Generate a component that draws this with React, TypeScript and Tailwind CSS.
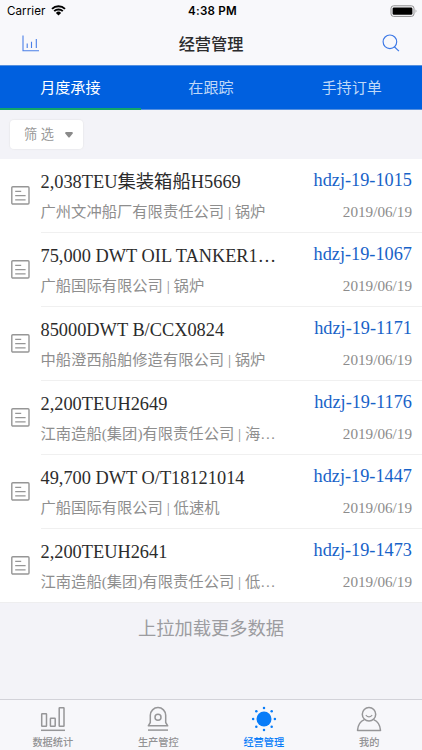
import React from 'react';

type Order = { title: string; company: string; code: string; date: string };

const orders: Order[] = [
    { title: '2,038TEU集装箱船H5669', company: '广州文冲船厂有限责任公司 | 锅炉', code: 'hdzj-19-1015', date: '2019/06/19' },
    { title: '75,000 DWT OIL TANKER1…', company: '广船国际有限公司 | 锅炉', code: 'hdzj-19-1067', date: '2019/06/19' },
    { title: '85000DWT B/CCX0824', company: '中船澄西船舶修造有限公司 | 锅炉', code: 'hdzj-19-1171', date: '2019/06/19' },
    { title: '2,200TEUH2649', company: '江南造船(集团)有限责任公司 | 海…', code: 'hdzj-19-1176', date: '2019/06/19' },
    { title: '49,700 DWT O/T18121014', company: '广船国际有限公司 | 低速机', code: 'hdzj-19-1447', date: '2019/06/19' },
    { title: '2,200TEUH2641', company: '江南造船(集团)有限责任公司 | 低…', code: 'hdzj-19-1473', date: '2019/06/19' },
];

const StatusBar: React.FC = () => (
    <div className="grid h-[22px] grid-cols-3 items-center pl-[7px] pr-1 font-['Inter',sans-serif] text-[11.6px] text-black">
        <div className="flex items-center gap-[6px] pt-px">
            <span className="tracking-[0.05px]">Carrier</span>
            <svg className="-mt-px" width="15" height="11" viewBox="0 0 15 11">
                <path d="M1 3.9a9.2 9.2 0 0 1 13 0M3.2 6.2a6.1 6.1 0 0 1 8.6 0" fill="none" stroke="#000" strokeWidth="1.9" />
                <path d="M4.9 7.9a3.7 3.7 0 0 1 5.2 0L7.5 10.6z" fill="#000" />
            </svg>
        </div>
        <span className="pt-px text-center font-semibold tracking-[0.25px] whitespace-nowrap">4:38 PM</span>
        <svg className="-mt-px justify-self-end" width="28" height="12" viewBox="0 0 28 12">
            <rect x="1" y="0.8" width="23" height="10.6" rx="2.6" fill="none" stroke="#8d8d8f" />
            <rect x="2.6" y="2.4" width="19.8" height="7.4" rx="1.3" fill="#000" />
            <path d="M25.6 4.2q1.8 1.8 0 3.8z" fill="#8d8d8f" />
        </svg>
    </div>
);

const Header: React.FC = () => (
    <div className="flex h-[43px] items-center justify-between pl-[22px] pr-[33px]">
        <svg width="18" height="17" viewBox="0 0 18 17" fill="none" stroke="#4a7fe8">
            <path d="M1 .5v15.2h16M5.2 13V8.6M9.5 13V6.8M14.3 13V4" strokeWidth="1.1" />
        </svg>
        <h1 className="pt-px text-[16.2px] font-medium text-[#2b2b2d]">经营管理</h1>
        <svg className="-mt-px -mr-[11px]" width="18" height="18" viewBox="0 0 18 18" fill="none" stroke="#3c78e6" strokeWidth="1.15">
            <circle cx="7.9" cy="7.8" r="6.8" />
            <path d="m12.1 12.5 4.8 4.6" />
        </svg>
    </div>
);

const Tabs: React.FC = () => (
    <div className="grid h-[45px] grid-cols-3 border-t border-[#5590df] bg-[#0060df] text-[15.1px] text-[#bfd8f8]">
        <div className="flex items-center justify-center border-b-2 border-[#12a569] pt-0.5 text-white">月度承接</div>
        <div className="flex items-center justify-center border-b border-[#5590df] pt-px">在跟踪</div>
        <div className="flex items-center justify-center border-b border-[#5590df] pt-px">手持订单</div>
    </div>
);

const OrderRow: React.FC<{ order: Order }> = ({ order }) => (
    <li className="group flex h-[74px] pl-[11px] last:h-[73px]">
        <svg className="mt-[27px] shrink-0" width="19" height="19" viewBox="0 0 19 19" fill="none" stroke="#969696" strokeWidth="1.4">
            <rect x=".8" y=".8" width="17.2" height="17.2" rx="1" />
            <path d="M4.2 5.3h6M4.2 9.6h10.4M4.2 13.8h10.4" strokeWidth="1.3" />
        </svg>
        <div className="ml-[10.5px] flex flex-1 justify-between border-b border-[#f0f0f0] pr-[10px] pt-[10px] whitespace-nowrap group-last:border-transparent">
            <div>
                <div className="text-[18.35px] leading-[27px] text-[#2c2c2c]">{order.title}</div>
                <div className="mt-[5px] text-[15.3px] leading-[22px] text-[#8e8e8e]">{order.company}</div>
            </div>
            <div className="text-right">
                <div className="-mt-[2px] text-[18.3px] leading-[27px] text-[#1762c8]">{order.code}</div>
                <div className="mt-[7px] text-[15.2px] leading-[22px] text-[#8c8c8c]">{order.date}</div>
            </div>
        </div>
    </li>
);

const StatsIcon = () => (
    <svg width="26" height="26" viewBox="0 0 26 26" fill="none" stroke="#969698" strokeWidth="1.5">
        <rect x="1.7" y="7.7" width="4.8" height="12.6" rx=".5" />
        <rect x="10.4" y="12.2" width="4.8" height="8.1" rx=".5" />
        <rect x="19.2" y="1.7" width="4.8" height="18.6" rx=".5" />
        <path d="M1 24.3h24" />
    </svg>
);

const AlarmIcon = () => (
    <svg width="26" height="26" viewBox="0 0 26 26" fill="none" stroke="#969698" strokeWidth="1.5" strokeLinejoin="round">
        <path d="M5.3 16.5V9.3a7.7 7.7 0 0 1 15.4 0v7.2l2 3.3H3.3z" />
        <circle cx="13" cy="11.2" r="3" />
        <path d="M3 24.1h20" />
    </svg>
);

const SunIcon = () => (
    <svg width="26" height="26" viewBox="0 0 26 26" fill="#087cf8">
        <circle cx="13" cy="13" r="7.5" />
        {[[13, 2.1], [20.7, 5.3], [23.9, 13], [20.7, 20.7], [13, 23.9], [5.3, 20.7], [2.1, 13], [5.3, 5.3]].map(([x, y]) => (
            <circle key={`${x}-${y}`} cx={x} cy={y} r="1.25" />
        ))}
    </svg>
);

const UserIcon = () => (
    <svg width="26" height="26" viewBox="0 0 26 26" fill="none" stroke="#969698" strokeWidth="1.5" strokeLinejoin="round">
        <circle cx="13" cy="8.2" r="6.7" />
        <path d="M9.8 9.2q3.2 3.4 6.4 0" strokeWidth="1.1" />
        <path d="M8.4 13.6C4.4 15.2 1.9 18.9 1.5 24.4h23c-.4-5.5-2.9-9.2-6.9-10.8" />
    </svg>
);

const navItems = [
    { label: '数据统计', icon: <StatsIcon />, active: false },
    { label: '生产管控', icon: <AlarmIcon />, active: false },
    { label: '经营管理', icon: <SunIcon />, active: true },
    { label: '我的', icon: <UserIcon />, active: false },
];

const App: React.FC = () => (
    <div className="flex h-[750px] w-[422px] flex-col overflow-hidden bg-[#f3f3f8] font-['Liberation_Sans','Noto_Sans_CJK_SC',sans-serif]">
        <header className="bg-[#f8f8fb]">
            <StatusBar />
            <Header />
        </header>
        <Tabs />
        <div className="h-[49px] pl-[10px] pt-[10px]">
            <button className="flex h-[29px] w-[73px] items-center gap-[11px] rounded-[4px] bg-white pl-[14px] text-[13.2px] text-[#979797] shadow-[0_0_1px_1px_#ececef]">
                <span className="whitespace-nowrap">筛 选</span>
                <svg width="8" height="6" viewBox="0 0 8 6" fill="#8a8a8a">
                    <path d="M1 0h6q1 0 .7 1.4L4.5 5.5h-1L.3 1.4Q0 0 1 0z" />
                </svg>
            </button>
        </div>
        <ul className="bg-white font-['Liberation_Serif','Noto_Sans_CJK_SC',serif]">
            {orders.map((order) => (
                <OrderRow key={order.code} order={order} />
            ))}
        </ul>
        <div className="flex-1 border-t border-[#eeeeef] pt-[12px] text-center text-[18.3px] leading-[27px] text-[#9c9ca0]">上拉加载更多数据</div>
        <nav className="grid h-[51px] grid-cols-4 border-t border-[#d2d2d9] bg-[#f7f7fa]">
            {navItems.map((item) => (
                <div key={item.label} className={`flex flex-col items-center pt-[6px] text-[10.2px] leading-[14px] font-medium ${item.active ? 'text-[#087cf8]' : 'text-[#929294]'}`}>
                    {item.icon}
                    <span className="mt-[4px]">{item.label}</span>
                </div>
            ))}
        </nav>
    </div>
);

export default App;
